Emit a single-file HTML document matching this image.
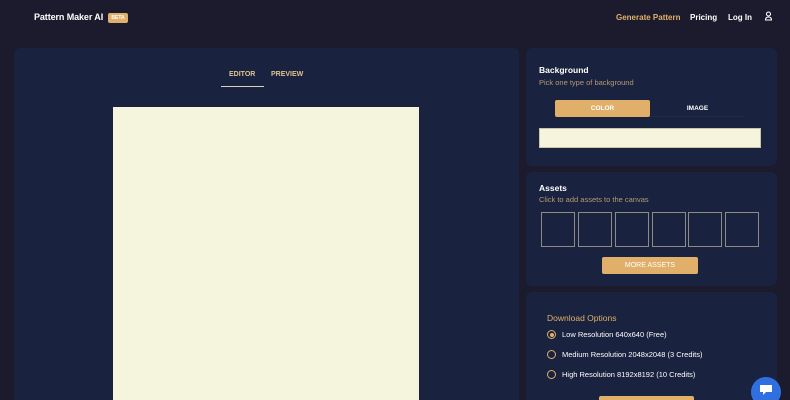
<!DOCTYPE html>
<html style="width:790px;height:400px;overflow:hidden"><head><style>
*{margin:0;padding:0;box-sizing:border-box}
body{width:790px;height:400px;overflow:hidden;background:#1c1b2d;font-family:"Liberation Sans",sans-serif;position:relative}
.abs{position:absolute}
.panel{position:absolute;background:#19223e;border-radius:6px}
.b{font-weight:bold}
</style></head><body>
<div class="abs b" style="left:34px;top:12px;font-size:9px;color:#fff;letter-spacing:-0.1px">Pattern Maker AI</div>
<div class="abs b" style="left:108px;top:13px;width:20px;height:10px;background:#e0b06a;border-radius:2px;font-size:5px;color:#fff;text-align:center;line-height:10px">BETA</div>
<div class="abs b" style="left:616px;top:13px;font-size:8px;color:#e0b06a">Generate Pattern</div>
<div class="abs b" style="left:690px;top:13px;font-size:8px;color:#fff">Pricing</div>
<div class="abs b" style="left:728px;top:13px;font-size:8px;color:#fff">Log In</div>
<svg class="abs" style="left:764px;top:11px" width="9" height="10" viewBox="0 0 9 10"><circle cx="4.5" cy="3" r="2" fill="none" stroke="#fff" stroke-width="1.1"/><path d="M1 9h7M1.5 9c0-2 1.3-3 3-3s3 1 3 3" fill="none" stroke="#fff" stroke-width="1.1"/></svg>

<div class="panel" style="left:14px;top:48px;width:505px;height:360px"></div>
<div class="abs b" style="left:229px;top:71px;font-size:7px;color:#e0c38e">EDITOR</div>
<div class="abs b" style="left:271px;top:71px;font-size:7px;color:#e0c38e">PREVIEW</div>
<div class="abs" style="left:221px;top:86px;width:43px;height:1px;background:#d8d2c0"></div>
<div class="abs" style="left:113px;top:107px;width:306px;height:300px;background:#f5f4dd"></div>

<div class="panel" style="left:526px;top:48px;width:251px;height:118px"></div>
<div class="abs b" style="left:539px;top:65px;font-size:8.5px;color:#fff">Background</div>
<div class="abs" style="left:539px;top:78px;font-size:7.5px;color:#b69a72">Pick one type of background</div>
<div class="abs b" style="left:555px;top:100px;width:95px;height:17px;background:#e0b06a;border-radius:2px;font-size:6.5px;color:#fff;text-align:center;line-height:17px">COLOR</div>
<div class="abs b" style="left:650px;top:100px;width:95px;height:17px;font-size:6.5px;color:#fff;text-align:center;line-height:17px;border-bottom:1px solid #222a44">IMAGE</div>
<div class="abs" style="left:539px;top:128px;width:222px;height:20px;background:#f5f4dd;border:1px solid #c9c4a8"></div>

<div class="panel" style="left:526px;top:172px;width:251px;height:114px"></div>
<div class="abs b" style="left:539px;top:183px;font-size:8.5px;color:#fff">Assets</div>
<div class="abs" style="left:539px;top:195px;font-size:7.5px;color:#b69a72">Click to add assets to the canvas</div>
<div class="abs" style="left:541px;top:212px;width:34px;height:35px;border:1px solid #8e8a85"></div>
<div class="abs" style="left:578px;top:212px;width:34px;height:35px;border:1px solid #8e8a85"></div>
<div class="abs" style="left:615px;top:212px;width:34px;height:35px;border:1px solid #8e8a85"></div>
<div class="abs" style="left:652px;top:212px;width:34px;height:35px;border:1px solid #8e8a85"></div>
<div class="abs" style="left:688px;top:212px;width:34px;height:35px;border:1px solid #8e8a85"></div>
<div class="abs" style="left:725px;top:212px;width:34px;height:35px;border:1px solid #8e8a85"></div>
<div class="abs" style="left:602px;top:257px;width:96px;height:17px;background:#e0b06a;border-radius:2px;font-size:7px;color:#fff;text-align:center;line-height:17px">MORE ASSETS</div>

<div class="panel" style="left:526px;top:292px;width:251px;height:120px"></div>
<div class="abs" style="left:547px;top:313px;font-size:8.5px;color:#e0b06a">Download Options</div>
<div class="abs" style="left:547px;top:330px;width:9px;height:9px;border:1px solid #e0b06a;border-radius:50%"><div style="margin:1.5px;width:4px;height:4px;border-radius:50%;background:#e0b06a"></div></div>
<div class="abs" style="left:562px;top:330px;font-size:7.5px;color:#fff">Low Resolution 640x640 (Free)</div>
<div class="abs" style="left:547px;top:350px;width:9px;height:9px;border:1px solid #e0b06a;border-radius:50%"></div>
<div class="abs" style="left:562px;top:350px;font-size:7.5px;color:#fff">Medium Resolution 2048x2048 (3 Credits)</div>
<div class="abs" style="left:547px;top:370px;width:9px;height:9px;border:1px solid #e0b06a;border-radius:50%"></div>
<div class="abs" style="left:562px;top:370px;font-size:7.5px;color:#fff">High Resolution 8192x8192 (10 Credits)</div>
<div class="abs" style="left:599px;top:396px;width:95px;height:10px;background:#e0b06a;border-radius:2px"></div>
<div class="abs" style="left:751px;top:377px;width:30px;height:30px;border-radius:50%;background:#2f6fe0"></div>
<svg class="abs" style="left:759px;top:384px" width="14" height="12" viewBox="0 0 14 12"><path d="M1 1h12v7H7l-3 3V8H1z" fill="#fff"/></svg>
</body></html>
